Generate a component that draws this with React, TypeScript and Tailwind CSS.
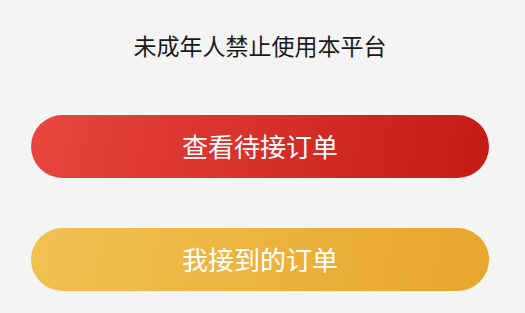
export default function App() {
  return (
    <div
      className="min-h-screen w-full bg-[#f4f4f4] pl-[31px] pr-[36px] pt-[31px]"
      style={{ fontFamily: '"Noto Sans CJK SC", "Noto Sans", sans-serif' }}
    >
      <h1 className="text-center text-[23px] leading-[28px] text-[#1a1a1a]">未成年人禁止使用本平台</h1>
      <div className="mt-[56px] flex flex-col gap-[50px]">
        <button className="h-[63px] w-full rounded-full bg-[linear-gradient(100deg,#e8463f,#c41b16)] pb-[3px] text-[26px] text-white">
          查看待接订单
        </button>
        <button className="h-[63px] w-full rounded-full bg-[linear-gradient(100deg,#f1c152,#e8a52b)] pb-[3px] text-[26px] text-white">
          我接到的订单
        </button>
      </div>
    </div>
  );
}
